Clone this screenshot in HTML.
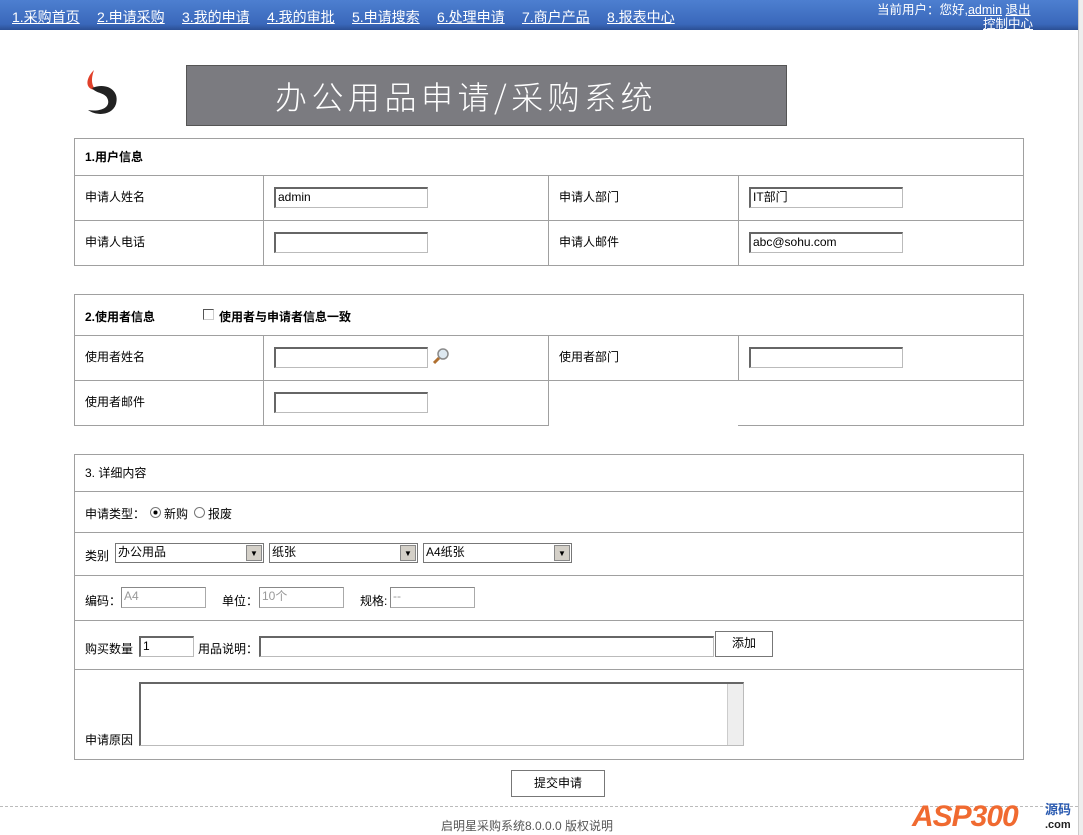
<!DOCTYPE html>
<html><head><meta charset="utf-8"><style>
*{margin:0;padding:0;box-sizing:border-box}
body{width:1083px;height:835px;position:relative;background:#fff;font-family:"Liberation Sans","Noto Sans CJK SC",sans-serif;font-size:12px;color:#000;overflow:hidden}
.a{position:absolute}
.nav{left:0;top:0;width:1078px;height:30px;background:linear-gradient(#4d7fd0,#3a68bb 80%,#2b4f94);}
.nav a{color:#fff;font-size:14px;text-decoration:underline;position:absolute;top:7px}
.box{position:absolute;border:1px solid #a0a0a0}
.h{position:absolute;background:#a0a0a0;height:1px}
.v{position:absolute;background:#a0a0a0;width:1px}
.t{position:absolute;font-size:12px;white-space:nowrap;line-height:14px}
.in{position:absolute;height:21px;border:1px solid #bbb;border-top:2px solid #666;border-left:2px solid #666;background:#fff;font-size:12px;padding-left:2px;line-height:17px;font-family:"Liberation Sans",sans-serif}
.dis{color:#999;border:1px solid #aaa;border-top:1px solid #888;border-left:1px solid #888}
.sel{position:absolute;height:20px;border:1px solid #777;background:#fff;font-size:12px;line-height:17px;padding-left:2px}
.sel b{position:absolute;right:1px;top:1px;width:16px;height:16px;background:#d4d0c8;border:1px solid #888;font-size:8px;text-align:center;line-height:15px;font-weight:normal}
.btn{position:absolute;border:1px solid #777;background:#fff;text-align:center;font-size:12px}
</style></head><body>
<div class="a nav">
<a style="left:12px">1.采购首页</a><a style="left:97px">2.申请采购</a><a style="left:182px">3.我的申请</a><a style="left:267px">4.我的审批</a><a style="left:352px">5.申请搜索</a><a style="left:437px">6.处理申请</a><a style="left:522px">7.商户产品</a><a style="left:607px">8.报表中心</a>
<span class="t" style="left:877px;top:3px;color:#fff;font-size:12.5px">当前用户：您好,<u>admin</u> <u>退出</u></span>
<span class="t" style="left:983px;top:17px;color:#fff;font-size:12.5px"><u>控制中心</u></span>
</div>
<div class="a" style="left:1078px;top:0;width:5px;height:835px;background:#eee;border-left:1px solid #ccc"></div>
<svg class="a" style="left:82px;top:68px" width="42" height="50" viewBox="0 0 42 50"><path d="M12 2 C2 12 4 22 14 22 C8 16 10 8 12 2Z" fill="#e0402a"/><path d="M10 20 C24 14 38 22 34 36 C30 48 14 48 6 42 C18 44 28 40 26 32 C24 24 14 26 10 20Z" fill="#222"/></svg>
<div class="a" style="left:186px;top:65px;width:601px;height:61px;background:#7b7b80;border:1px solid #555;color:#fff;font-size:32px;letter-spacing:4.5px;padding-left:88px;line-height:60px;font-family:'Noto Sans CJK SC',sans-serif;font-weight:300;white-space:nowrap">办公用品申请/采购系统</div>

<!-- section 1 -->
<div class="box" style="left:74px;top:138px;width:950px;height:128px"></div>
<div class="h" style="left:74px;top:175px;width:950px"></div>
<div class="h" style="left:74px;top:220px;width:950px"></div>
<div class="v" style="left:263px;top:175px;height:90px"></div>
<div class="v" style="left:548px;top:175px;height:90px"></div>
<div class="v" style="left:738px;top:175px;height:90px"></div>
<span class="t" style="left:85px;top:150px;font-weight:bold">1.用户信息</span>
<span class="t" style="left:85px;top:190px">申请人姓名</span>
<span class="t" style="left:559px;top:190px">申请人部门</span>
<span class="t" style="left:85px;top:235px">申请人电话</span>
<span class="t" style="left:559px;top:235px">申请人邮件</span>
<div class="in" style="left:274px;top:187px;width:154px">admin</div>
<div class="in" style="left:749px;top:187px;width:154px">IT部门</div>
<div class="in" style="left:274px;top:232px;width:154px"></div>
<div class="in" style="left:749px;top:232px;width:154px">abc@sohu.com</div>

<!-- section 2 -->
<div class="box" style="left:74px;top:294px;width:950px;height:132px;border-bottom:none"></div>
<div class="h" style="left:74px;top:335px;width:950px"></div>
<div class="h" style="left:74px;top:380px;width:950px"></div>
<div class="h" style="left:74px;top:425px;width:475px"></div>
<div class="h" style="left:738px;top:425px;width:286px"></div>
<div class="v" style="left:263px;top:335px;height:90px"></div>
<div class="v" style="left:548px;top:335px;height:90px"></div>
<div class="v" style="left:738px;top:335px;height:45px"></div>
<span class="t" style="left:85px;top:310px;font-weight:bold">2.使用者信息</span>
<div class="a" style="left:203px;top:309px;width:11px;height:11px;border:1px solid #555;border-right-color:#ccc;border-bottom-color:#ccc"></div>
<span class="t" style="left:219px;top:310px;font-weight:bold">使用者与申请者信息一致</span>
<span class="t" style="left:85px;top:350px">使用者姓名</span>
<span class="t" style="left:559px;top:350px">使用者部门</span>
<span class="t" style="left:85px;top:395px">使用者邮件</span>
<div class="in" style="left:274px;top:347px;width:154px"></div>
<svg class="a" style="left:432px;top:347px" width="18" height="18" viewBox="0 0 18 18"><circle cx="11" cy="7" r="5" fill="#dde8f0" stroke="#8a8a8a" stroke-width="1.5"/><path d="M7 11 L2 16" stroke="#b07030" stroke-width="3"/></svg>
<div class="in" style="left:749px;top:347px;width:154px"></div>
<div class="in" style="left:274px;top:392px;width:154px"></div>

<!-- section 3 -->
<div class="box" style="left:74px;top:454px;width:950px;height:306px"></div>
<div class="h" style="left:74px;top:491px;width:950px"></div>
<div class="h" style="left:74px;top:532px;width:950px"></div>
<div class="h" style="left:74px;top:575px;width:950px"></div>
<div class="h" style="left:74px;top:620px;width:950px"></div>
<div class="h" style="left:74px;top:669px;width:950px"></div>
<span class="t" style="left:85px;top:466px">3. 详细内容</span>
<span class="t" style="left:85px;top:507px">申请类型：</span>
<div class="a" style="left:150px;top:507px;width:11px;height:11px;border-radius:50%;border:1px solid #777;background:radial-gradient(#000 30%,#fff 35%)"></div>
<span class="t" style="left:164px;top:507px">新购</span>
<div class="a" style="left:194px;top:507px;width:11px;height:11px;border-radius:50%;border:1px solid #777"></div>
<span class="t" style="left:208px;top:507px">报废</span>
<span class="t" style="left:85px;top:549px">类别</span>
<div class="sel" style="left:115px;top:543px;width:149px">办公用品<b>▼</b></div>
<div class="sel" style="left:269px;top:543px;width:149px">纸张<b>▼</b></div>
<div class="sel" style="left:423px;top:543px;width:149px">A4纸张<b>▼</b></div>
<span class="t" style="left:85px;top:594px">编码：</span>
<div class="in dis" style="left:121px;top:587px;width:85px">A4</div>
<span class="t" style="left:222px;top:594px">单位：</span>
<div class="in dis" style="left:259px;top:587px;width:85px">10个</div>
<span class="t" style="left:360px;top:594px">规格:</span>
<div class="in dis" style="left:390px;top:587px;width:85px">--</div>
<span class="t" style="left:85px;top:642px">购买数量</span>
<div class="in" style="left:139px;top:636px;width:55px">1</div>
<span class="t" style="left:198px;top:642px">用品说明：</span>
<div class="in" style="left:259px;top:636px;width:455px"></div>
<div class="btn" style="left:715px;top:631px;width:58px;height:26px;line-height:23px">添加</div>
<span class="t" style="left:85px;top:733px">申请原因</span>
<div class="in" style="left:139px;top:682px;width:605px;height:64px"></div>
<div class="a" style="left:727px;top:684px;width:16px;height:61px;background:#eee;border-left:1px solid #ccc"></div>

<div class="btn" style="left:511px;top:770px;width:94px;height:27px;line-height:24px">提交申请</div>
<div class="a" style="left:0;top:806px;width:1078px;border-top:1px dashed #bbb"></div>
<span class="t" style="left:441px;top:819px;color:#555">启明星采购系统8.0.0.0 版权说明</span>
<div class="a" style="left:912px;top:800px;font-size:30px;font-weight:bold;font-style:italic;color:#f06a30;letter-spacing:-1px">ASP300</div>
<div class="a" style="left:1045px;top:803px;font-size:13px;font-weight:bold;color:#2a5ab0;line-height:14px">源码<br><span style="font-size:11px;color:#222">.com</span></div>
</body></html>
